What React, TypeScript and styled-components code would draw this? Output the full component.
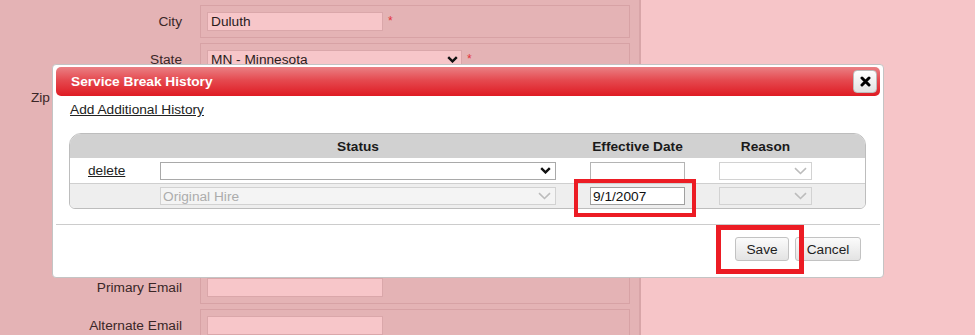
import styled, { createGlobalStyle } from "styled-components";

const GlobalStyle = createGlobalStyle`
  html, body {
    margin: 0;
    padding: 0;
    background: #f6c5c8;
    font-family: "Liberation Sans", Arial, sans-serif;
    overflow: hidden;
  }
`;

const Page = styled.div`
  position: relative;
  width: 975px;
  height: 335px;
  display: flex;
  background: #f6c5c8;
  overflow: hidden;
`;

const FormPanel = styled.div`
  width: 641px;
  height: 335px;
  background: #e4b3b5;
  border-right: 2px solid #d8a5a8;
  padding-top: 5px;
  box-sizing: border-box;
  display: flex;
  flex-direction: column;
  gap: 5px;
`;

const FormRow = styled.div`
  display: flex;
  align-items: center;
  height: 33px;
  flex-shrink: 0;
`;

const FieldLabel = styled.div`
  width: 182px;
  margin-right: 18px;
  text-align: right;
  font-size: 13.7px;
  color: #3a2727;
  white-space: nowrap;
`;

const FieldCell = styled.div`
  box-sizing: border-box;
  width: 430px;
  height: 33px;
  border: 1px solid #d7a2a5;
  display: flex;
  align-items: center;
  padding-left: 6px;
  gap: 5px;
`;

const TextBox = styled.div<{ $width: number }>`
  box-sizing: border-box;
  width: ${(p) => p.$width}px;
  height: 19px;
  background: #f7c6c9;
  border: 1px solid #daa7aa;
  font-size: 13.7px;
  line-height: 17px;
  padding: 0 3px;
  color: #2a1b1b;
  display: flex;
  align-items: center;
  justify-content: space-between;
`;

const Required = styled.span`
  color: #e3343b;
  font-size: 12px;
  align-self: flex-start;
  margin-top: 8px;
`;

const Modal = styled.div`
  position: absolute;
  left: 52px;
  top: 64px;
  width: 832px;
  height: 214px;
  box-sizing: border-box;
  background: #ffffff;
  border: 1px solid #c4c4c4;
  border-radius: 4px;
  padding: 2px 3px;
  display: flex;
  flex-direction: column;
`;

const TitleBar = styled.div`
  height: 29px;
  flex-shrink: 0;
  border-radius: 5px;
  background: linear-gradient(to bottom, #ea8084 0%, #e54a50 45%, #df1b23 100%);
  display: flex;
  align-items: center;
  justify-content: space-between;
  padding: 0 3px 0 15px;
`;

const Title = styled.span`
  color: #ffffff;
  font-weight: 700;
  font-size: 13.7px;
`;

const CloseButton = styled.button`
  box-sizing: border-box;
  width: 24px;
  height: 23px;
  padding: 0;
  border: 1px solid #bcbcbc;
  border-radius: 4px;
  background: linear-gradient(to bottom, #ffffff, #e2e2e2);
  display: flex;
  align-items: center;
  justify-content: center;
`;

const Content = styled.div`
  padding: 0 14px 0 13px;
  display: flex;
  flex-direction: column;
`;

const AddLink = styled.a`
  margin-top: 6px;
  margin-left: 1px;
  font-size: 13.7px;
  line-height: 16px;
  color: #222222;
  text-decoration: underline;
  align-self: flex-start;
`;

const Table = styled.div`
  margin-top: 15px;
  border: 1px solid #bdbdbd;
  border-radius: 12px 12px 6px 6px;
  overflow: hidden;
`;

const GridRow = styled.div<{ $bg: string; $h: number; $line?: boolean }>`
  display: grid;
  grid-template-columns: 56px 396px 95px 93px;
  column-gap: 34px;
  align-items: center;
  height: ${(p) => p.$h}px;
  background: ${(p) => p.$bg};
  border-bottom: ${(p) => (p.$line ? "1px solid #cfcfcf" : "none")};
`;

const HeadCell = styled.div`
  text-align: center;
  font-weight: 700;
  font-size: 13.7px;
  color: #1a1a1a;
  white-space: nowrap;
`;

const DeleteLink = styled.a`
  padding-left: 18px;
  font-size: 13.7px;
  color: #1e1e1e;
  text-decoration: underline;
`;

const Control = styled.div<{ $bg: string; $border: string; $muted?: boolean }>`
  box-sizing: border-box;
  height: 18px;
  background: ${(p) => p.$bg};
  border: 1px solid ${(p) => p.$border};
  display: flex;
  align-items: center;
  justify-content: space-between;
  padding: 0 4px 0 2px;
  font-size: 13.7px;
  color: ${(p) => (p.$muted ? "#acacac" : "#111111")};
`;

const Divider = styled.div`
  margin-top: 15px;
  height: 1px;
  background: #cccccc;
`;

const Footer = styled.div`
  display: flex;
  justify-content: flex-end;
  gap: 6px;
  padding: 12px 19px 0 0;
`;

const Button = styled.button<{ $w: number }>`
  box-sizing: border-box;
  width: ${(p) => p.$w}px;
  height: 24px;
  border: 1px solid #c2c2c2;
  border-radius: 3px;
  background: linear-gradient(to bottom, #fbfbfb, #e3e3e3);
  font-family: "Liberation Sans", Arial, sans-serif;
  font-size: 13.7px;
  color: #1e1e1e;
  padding: 0;
`;

const Highlight = styled.div<{ $x: number; $y: number; $w: number; $h: number; $t: number }>`
  position: absolute;
  left: ${(p) => p.$x}px;
  top: ${(p) => p.$y}px;
  width: ${(p) => p.$w}px;
  height: ${(p) => p.$h}px;
  box-sizing: border-box;
  border: ${(p) => p.$t}px solid #ec1c24;
`;

const Chevron = ({ dim }: { dim?: boolean }) =>
  dim ? (
    <svg width="13" height="8" viewBox="0 0 13 8">
      <path d="M1 1.2 L6.5 6.5 L12 1.2" fill="none" stroke="#bcbcbc" strokeWidth="1.6" />
    </svg>
  ) : (
    <svg width="11" height="7" viewBox="0 0 11 7">
      <path d="M1.2 1.2 L5.5 5.4 L9.8 1.2" fill="none" stroke="#111" strokeWidth="2.4" />
    </svg>
  );

// rows that sit fully behind the dialog
const hiddenRows = [1, 2, 3, 4];

export default function App() {
  return (
    <Page>
      <GlobalStyle />
      <FormPanel>
        <FormRow>
          <FieldLabel>City</FieldLabel>
          <FieldCell>
            <TextBox $width={176}>Duluth</TextBox>
            <Required>*</Required>
          </FieldCell>
        </FormRow>
        <FormRow>
          <FieldLabel>State</FieldLabel>
          <FieldCell>
            <TextBox $width={255}>
              MN - Minnesota
              <Chevron />
            </TextBox>
            <Required>*</Required>
          </FieldCell>
        </FormRow>
        <FormRow>
          <FieldLabel>Zip / Postal Code + Zip 4</FieldLabel>
          <FieldCell>
            <TextBox $width={90} />
          </FieldCell>
        </FormRow>
        {hiddenRows.map((r) => (
          <FormRow key={r}>
            <FieldLabel />
            <FieldCell>
              <TextBox $width={176} />
            </FieldCell>
          </FormRow>
        ))}
        <FormRow>
          <FieldLabel>Primary Email</FieldLabel>
          <FieldCell>
            <TextBox $width={176} />
          </FieldCell>
        </FormRow>
        <FormRow>
          <FieldLabel>Alternate Email</FieldLabel>
          <FieldCell>
            <TextBox $width={176} />
          </FieldCell>
        </FormRow>
      </FormPanel>

      <Modal>
        <TitleBar>
          <Title>Service Break History</Title>
          <CloseButton>
            <svg width="11" height="11" viewBox="0 0 11 11">
              <path d="M2 2 L9 9 M9 2 L2 9" stroke="#000" strokeWidth="3" strokeLinecap="round" />
            </svg>
          </CloseButton>
        </TitleBar>
        <Content>
          <AddLink>Add Additional History</AddLink>
          <Table>
            <GridRow $bg="#d1d1d1" $h={24}>
              <span />
              <HeadCell>Status</HeadCell>
              <HeadCell>Effective Date</HeadCell>
              <HeadCell>Reason</HeadCell>
            </GridRow>
            <GridRow $bg="#ffffff" $h={25} $line>
              <DeleteLink>delete</DeleteLink>
              <Control $bg="#ffffff" $border="#a9a9a9">
                <span />
                <Chevron />
              </Control>
              <Control $bg="#ffffff" $border="#b4b4b4" />
              <Control $bg="#ffffff" $border="#d2d2d2">
                <span />
                <Chevron dim />
              </Control>
            </GridRow>
            <GridRow $bg="#eeeeee" $h={24}>
              <span />
              <Control $bg="#f4f4f4" $border="#d2d2d2" $muted>
                Original Hire
                <Chevron dim />
              </Control>
              <Control $bg="#ffffff" $border="#a0a0a0">
                9/1/2007
              </Control>
              <Control $bg="#eeeeee" $border="#d2d2d2">
                <span />
                <Chevron dim />
              </Control>
            </GridRow>
          </Table>
        </Content>
        <Divider />
        <Footer>
          <Button $w={54}>Save</Button>
          <Button $w={66}>Cancel</Button>
        </Footer>
      </Modal>

      <Highlight $x={574} $y={179} $w={122} $h={38} $t={4} />
      <Highlight $x={716} $y={225} $w={88} $h={49} $t={5} />
    </Page>
  );
}
